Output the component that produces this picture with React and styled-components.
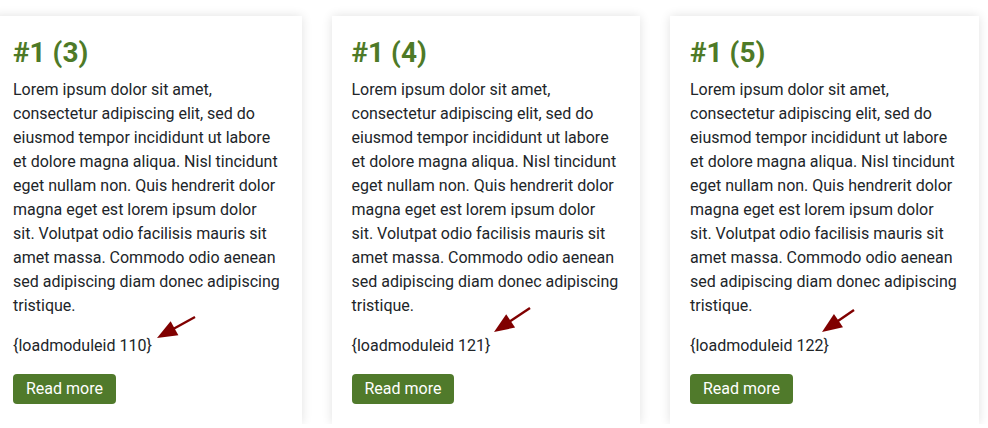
import styled, { createGlobalStyle } from "styled-components";

const GlobalStyle = createGlobalStyle`
  body {
    margin: 0;
    background: #fff;
    font-family: Roboto, "Liberation Sans", sans-serif;
    overflow: hidden;
  }
`;

const items = [
  { n: 3, mod: 110, arrow: { x1: 202, y1: 301, x2: 164, y2: 322 } },
  { n: 4, mod: 121, arrow: { x1: 198, y1: 292, x2: 162, y2: 316 } },
  { n: 5, mod: 122, arrow: { x1: 184, y1: 294, x2: 152, y2: 316 } },
];

const lorem =
  "Lorem ipsum dolor sit amet, consectetur adipiscing elit, sed do eiusmod tempor incididunt ut labore et dolore magna aliqua. Nisl tincidunt eget nullam non. Quis hendrerit dolor magna eget est lorem ipsum dolor sit. Volutpat odio facilisis mauris sit amet massa. Commodo odio aenean sed adipiscing diam donec adipiscing tristique.";

function Arrow({ x1, y1, x2, y2 }) {
  const dx = x2 - x1;
  const dy = y2 - y1;
  const len = Math.hypot(dx, dy);
  const ux = dx / len;
  const uy = dy / len;
  const head = 20;
  const half = 8;
  const bx = x2 - ux * head;
  const by = y2 - uy * head;
  const pts = [
    [x2, y2],
    [bx - uy * half, by + ux * half],
    [bx + uy * half, by - ux * half],
  ]
    .map((p) => p.join(","))
    .join(" ");
  return (
    <ArrowLayer>
      <line x1={x1} y1={y1} x2={bx + ux * 2} y2={by + uy * 2} stroke="#800000" strokeWidth="2.4" />
      <polygon points={pts} fill="#800000" />
    </ArrowLayer>
  );
}

export default function App() {
  return (
    <>
      <GlobalStyle />
      <Row>
        {items.map((it) => (
          <Card key={it.n}>
            <Title>#1 ({it.n})</Title>
            <Text>{lorem}</Text>
            <Text>{`{loadmoduleid ${it.mod}}`}</Text>
            <ReadMore>Read more</ReadMore>
            <Arrow {...it.arrow} />
          </Card>
        ))}
      </Row>
    </>
  );
}

const Row = styled.div`
  display: flex;
  gap: 30px;
  margin-left: -7px;
  padding-top: 16px;
`;

const Card = styled.article`
  position: relative;
  flex: 0 0 308.5px;
  box-sizing: border-box;
  padding: 20px;
  background: #fff;
  box-shadow: 0 0 10px rgba(0, 0, 0, 0.12);
  display: flex;
  flex-direction: column;
  align-items: flex-start;
`;

const Title = styled.h2`
  margin: 0 0 8px;
  font-size: 28px;
  line-height: 1.2;
  font-weight: 700;
  color: #4e7a27;
`;

const Text = styled.p`
  margin: 0 0 16px;
  font-size: 16px;
  line-height: 24px;
  color: #212529;
`;

const ReadMore = styled.button`
  padding: 4px 13px;
  border: none;
  border-radius: 4px;
  background: #507a2b;
  color: #fff;
  font-family: Roboto, "Liberation Sans", sans-serif;
  font-size: 16px;
  line-height: 22px;
`;

const ArrowLayer = styled.svg`
  position: absolute;
  left: 0;
  top: 0;
  width: 100%;
  height: 100%;
  overflow: visible;
  pointer-events: none;
`;
